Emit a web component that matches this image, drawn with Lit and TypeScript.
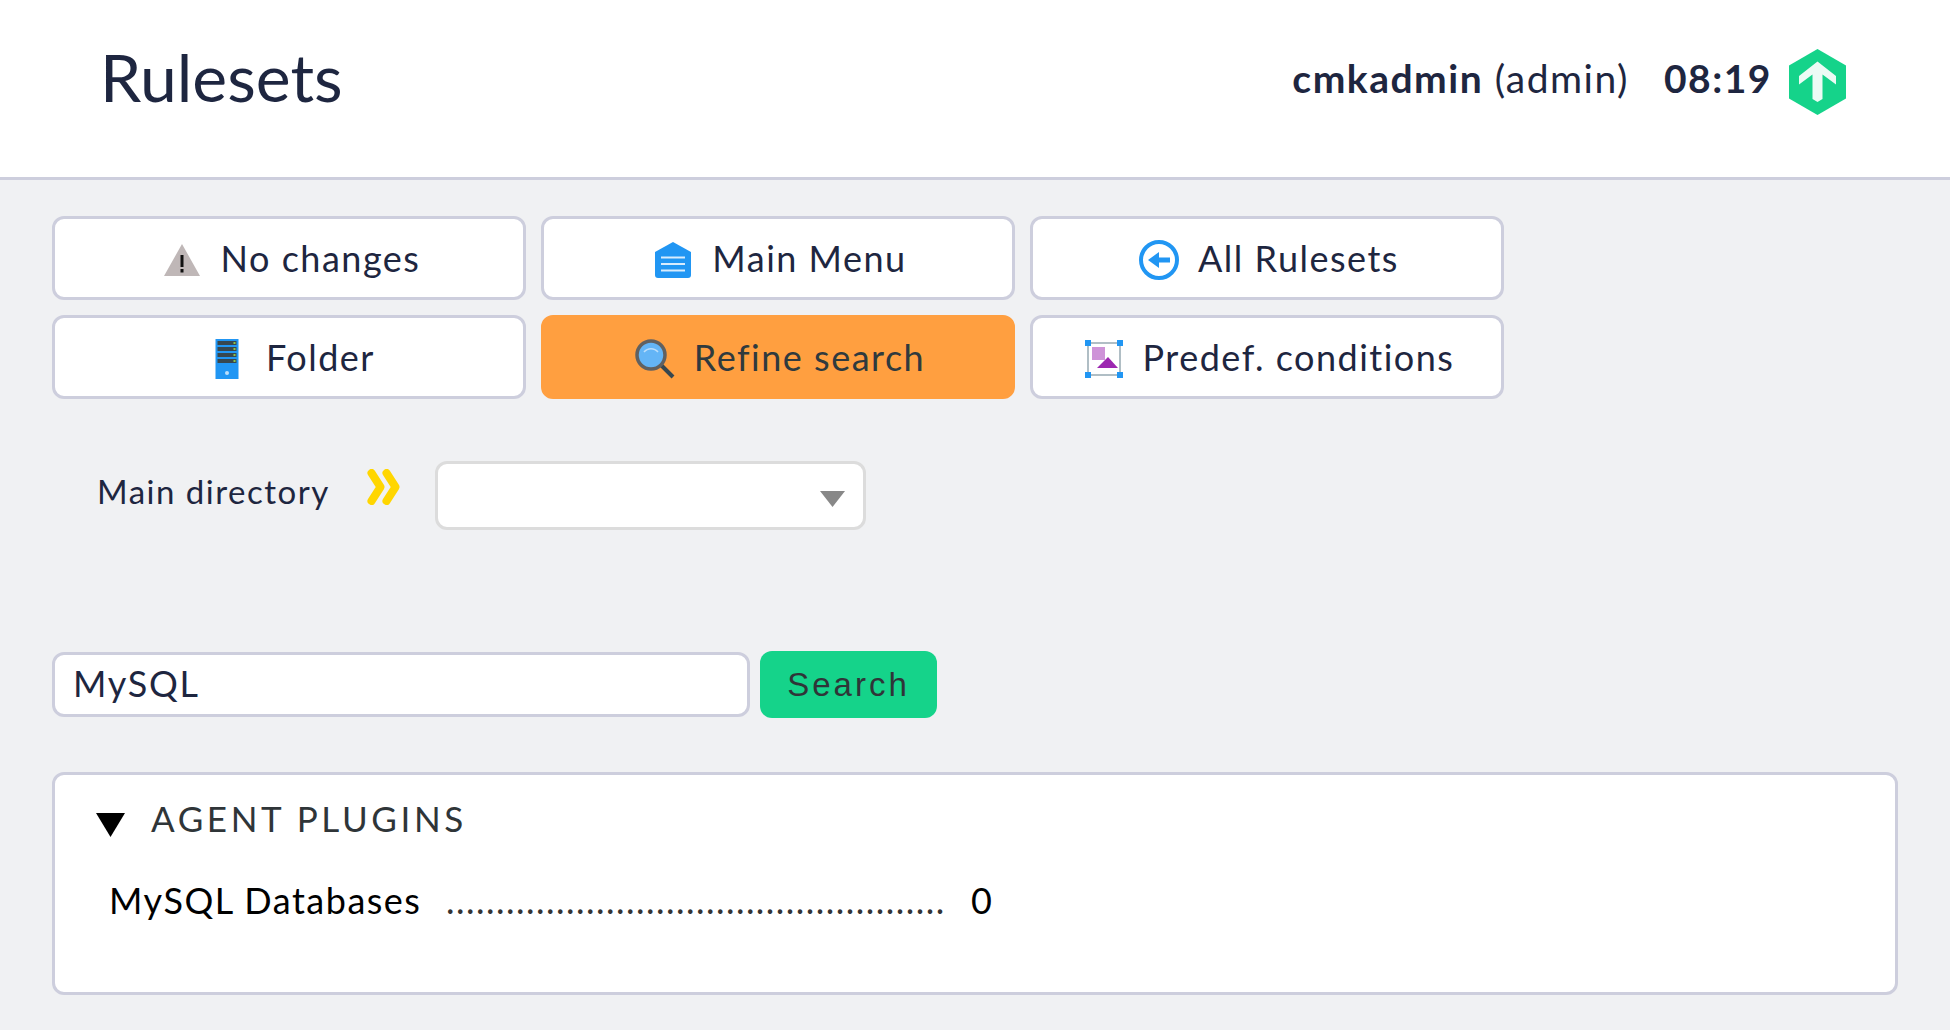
import { LitElement, html, css } from 'lit'
import { customElement } from 'lit/decorators.js'

const warningIcon = html`<svg viewBox="0 0 40 40" width="40" height="40">
  <path d="M20 4 L38 36 H2 Z" fill="#bfb7b7" />
  <rect x="18.5" y="15" width="3" height="12" fill="#111" />
  <rect x="18.5" y="29" width="3" height="3.5" fill="#111" />
</svg>`

const menuIcon = html`<svg viewBox="0 0 40 40" width="40" height="40">
  <path d="M20 2 L38 12 V35 a3 3 0 0 1 -3 3 H5 a3 3 0 0 1 -3 -3 V12 Z" fill="#2196f3" />
  <path d="M8 17.5 H32 M8 24 H32 M8 30.5 H32" stroke="#d8ecfd" stroke-width="2" />
</svg>`

const backIcon = html`<svg viewBox="0 0 40 40" width="40" height="40">
  <circle cx="20" cy="20" r="18" fill="none" stroke="#2196f3" stroke-width="4" />
  <path d="M9 20 L20 12 V17.5 H31 V22.5 H20 V28 Z" fill="#2196f3" />
</svg>`

const serverIcon = html`<svg viewBox="0 0 40 40" width="40" height="40">
  <rect x="8.5" y="0" width="23" height="40" fill="#2196f3" />
  <rect x="10.5" y="2" width="19" height="4" fill="#37474f" />
  <rect x="10.5" y="8" width="19" height="4" fill="#37474f" />
  <rect x="10.5" y="14" width="19" height="4" fill="#37474f" />
  <rect x="10.5" y="20" width="19" height="4" fill="#37474f" />
  <rect x="26.5" y="3" width="2" height="2" fill="#8bc34a" />
  <rect x="26.5" y="9" width="2" height="2" fill="#8bc34a" />
  <rect x="26.5" y="15" width="2" height="2" fill="#8bc34a" />
  <rect x="26.5" y="21" width="2" height="2" fill="#8bc34a" />
  <circle cx="20" cy="34" r="2" fill="#bbdefb" />
</svg>`

const searchIcon = html`<svg viewBox="0 0 40 40" width="40" height="40">
  <path d="M26 26 L38 38" stroke="#37474f" stroke-width="4" />
  <circle cx="16" cy="16" r="14" fill="#64b5f6" stroke="#616161" stroke-width="3.5" />
  <path d="M9 13 A9 9 0 0 1 23 13" fill="none" stroke="#bbdefb" stroke-width="1.5" />
</svg>`

const conditionsIcon = html`<svg viewBox="0 0 40 40" width="40" height="40">
  <rect x="4" y="4" width="32" height="32" fill="none" stroke="#b0bec5" stroke-width="2" />
  <rect x="8" y="8" width="13" height="13" fill="#ce93d8" />
  <path d="M24 18 L34 29 H13 Z" fill="#9c27b0" />
  <rect x="1" y="1" width="6" height="6" fill="#2196f3" />
  <rect x="33" y="1" width="6" height="6" fill="#2196f3" />
  <rect x="1" y="33" width="6" height="6" fill="#2196f3" />
  <rect x="33" y="33" width="6" height="6" fill="#2196f3" />
</svg>`

const buttons = [
  { label: 'No changes', icon: warningIcon },
  { label: 'Main Menu', icon: menuIcon },
  { label: 'All Rulesets', icon: backIcon },
  { label: 'Folder', icon: serverIcon },
  { label: 'Refine search', icon: searchIcon, active: true },
  { label: 'Predef. conditions', icon: conditionsIcon },
]

@customElement('app-root')
export class AppRoot extends LitElement {
  static styles = css`
    :host {
      display: block;
      min-height: 100vh;
      background: #f0f1f3;
      color: #1e2640;
      font-family: Lato, 'Liberation Sans', sans-serif;
    }
    .header {
      display: flex;
      align-items: center;
      justify-content: space-between;
      height: 177px;
      padding: 0 104px 0 100px;
      background: #fff;
      border-bottom: 3px solid #cdcedd;
    }
    h1 {
      margin: 0;
      font-size: 66px;
      font-weight: 400;
      position: relative;
      top: -12px;
    }
    .user {
      display: flex;
      align-items: center;
      margin-top: -13px;
      font-size: 39px;
      letter-spacing: 1.5px;
    }
    .user b {
      font-weight: 700;
    }
    .time {
      margin-left: 35px;
      margin-right: 17px;
      font-weight: 700;
    }
    .user svg {
      display: block;
    }
    .user-text {
      display: flex;
      margin-top: -8px;
    }
    main {
      padding: 36px 52px 0;
    }
    .buttons {
      display: grid;
      grid-template-columns: repeat(3, 474px);
      grid-auto-rows: 84px;
      gap: 15px;
    }
    .btn {
      box-sizing: border-box;
      display: flex;
      align-items: center;
      justify-content: center;
      gap: 19px;
      padding-left: 4px;
      background: #fff;
      border: 3px solid #cdcedd;
      border-radius: 12px;
      font-size: 36px;
      letter-spacing: 1.5px;
    }
    .btn svg {
      display: block;
      flex: none;
      margin-top: 3px;
    }
    .btn.active {
      background: #ff9f40;
      border-color: #ff9f40;
      color: #2f3a3e;
    }
    .dir {
      display: flex;
      align-items: flex-start;
      margin-top: 62px;
      padding-left: 45px;
    }
    .dir label {
      font-size: 33px;
      letter-spacing: 1.5px;
      margin-top: 10px;
      width: 270px;
    }
    .chevrons {
      display: block;
      flex: none;
      margin-top: 8px;
      margin-right: 35px;
    }
    .select {
      box-sizing: border-box;
      width: 431px;
      height: 69px;
      display: flex;
      align-items: center;
      justify-content: flex-end;
      padding: 6px 18px 0 0;
      background: #fff;
      border: 3px solid #dcdcdc;
      border-radius: 12px;
    }
    .search {
      display: flex;
      align-items: center;
      gap: 10px;
      margin-top: 121px;
    }
    input {
      box-sizing: border-box;
      width: 698px;
      height: 65px;
      padding: 0 18px 3px;
      background: #fff;
      border: 3px solid #cdcedd;
      border-radius: 12px;
      color: #1e2640;
      font: 400 36px Lato, 'Liberation Sans', sans-serif;
      letter-spacing: 1.7px;
      outline: none;
    }
    .search button {
      width: 177px;
      height: 67px;
      padding: 0;
      background: #15d38a;
      border: none;
      border-radius: 12px;
      color: #2f3538;
      font: 400 33px 'Liberation Sans', sans-serif;
      letter-spacing: 3px;
    }
    .card {
      box-sizing: border-box;
      height: 223px;
      margin-top: 54px;
      padding: 22px 0 0 41px;
      background: #fff;
      border: 3px solid #cdcedd;
      border-radius: 12px;
    }
    .card-head {
      display: flex;
      align-items: flex-start;
      gap: 26px;
      font-size: 35px;
      letter-spacing: 3.6px;
      color: #2f3538;
    }
    .card-head svg {
      display: block;
      flex: none;
      margin-top: 16px;
    }
    .row {
      display: flex;
      align-items: baseline;
      margin-top: 39px;
      margin-left: 13px;
      color: #000;
      font-size: 36px;
      letter-spacing: 1.5px;
    }
    .name {
      width: 337px;
    }
    .dots {
      width: 496px;
      white-space: nowrap;
      color: #333;
    }
    .count {
      margin-left: 29px;
    }
  `

  render() {
    return html`
      <div class="header">
        <h1>Rulesets</h1>
        <div class="user">
          <div class="user-text">
            <span><b>cmkadmin</b> (admin)</span>
            <span class="time">08:19</span>
          </div>
          <svg viewBox="0 0 57 66" width="57" height="66">
            <path d="M28.5 0 L57 16.5 V49.5 L28.5 66 L0 49.5 V16.5 Z" fill="#15d38a" />
            <path d="M28.5 12.5 L47 27 V35.5 L33.5 25.5 V50 L28.5 53 L23.5 50 V25.5 L10 35.5 V27 Z" fill="#ecfbf5" />
          </svg>
        </div>
      </div>
      <main>
        <div class="buttons">
          ${buttons.map(
            (b) => html`<div class="btn ${b.active ? 'active' : ''}">${b.icon}<span>${b.label}</span></div>`
          )}
        </div>
        <div class="dir">
          <label>Main directory</label>
          <svg class="chevrons" viewBox="0 0 33 36" width="33" height="36">
            <path d="M4.5 4 L13.5 18 L4.5 32 M19.5 4 L28.5 18 L19.5 32" fill="none" stroke="#ffd600" stroke-width="8" stroke-linecap="round" stroke-linejoin="round" />
          </svg>
          <div class="select">
            <svg viewBox="0 0 25 16" width="25" height="16"><path d="M0 0 H25 L12.5 16 Z" fill="#888" /></svg>
          </div>
        </div>
        <div class="search">
          <input type="text" .value=${'MySQL'} />
          <button>Search</button>
        </div>
        <div class="card">
          <div class="card-head">
            <svg viewBox="0 0 29 24" width="29" height="24"><path d="M0 0 H29 L14.5 24 Z" fill="#000" /></svg>
            <span>AGENT PLUGINS</span>
          </div>
          <div class="row">
            <span class="name">MySQL Databases</span>
            <span class="dots">${'.'.repeat(50)}</span>
            <span class="count">0</span>
          </div>
        </div>
      </main>
    `
  }
}
